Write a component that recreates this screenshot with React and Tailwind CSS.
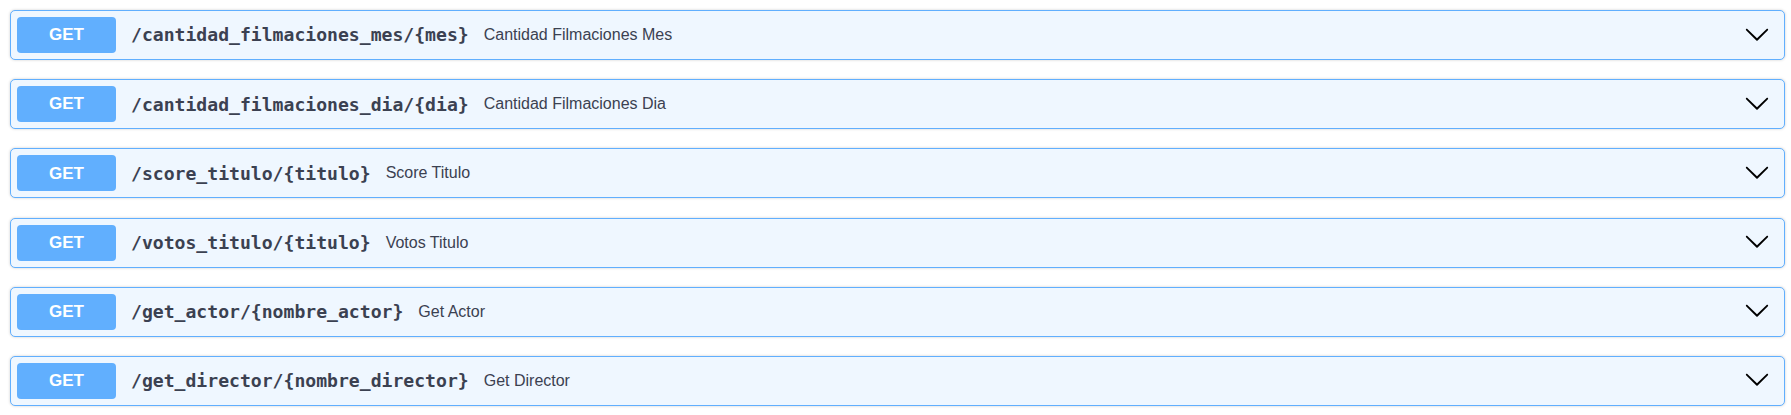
import React from "react";

const ops = [
  { path: "/cantidad_filmaciones_mes/{mes}", desc: "Cantidad Filmaciones Mes" },
  { path: "/cantidad_filmaciones_dia/{dia}", desc: "Cantidad Filmaciones Dia" },
  { path: "/score_titulo/{titulo}", desc: "Score Titulo" },
  { path: "/votos_titulo/{titulo}", desc: "Votos Titulo" },
  { path: "/get_actor/{nombre_actor}", desc: "Get Actor" },
  { path: "/get_director/{nombre_director}", desc: "Get Director" },
];

function Chevron() {
  return (
    <svg width="26" height="26" viewBox="0 0 20 20" className="shrink-0 mr-[8px] mt-[-3px]" fill="#000">
      <path d="M17.418 6.109c.272-.268.709-.268.979 0s.271.701 0 .969l-7.908 7.83c-.27.268-.707.268-.979 0l-7.908-7.83c-.27-.268-.27-.701 0-.969.271-.268.709-.268.979 0L10 13.25l7.418-7.141z" />
    </svg>
  );
}

export default function App() {
  return (
    <div className="w-[1791px] h-[415px] bg-white pt-[10px] pl-[10px]" style={{ fontFamily: '"Liberation Sans", Arial, sans-serif' }}>
      <div className="w-[1775px] flex flex-col gap-[19.2px]">
        {ops.map((op) => (
          <div
            key={op.path}
            className="h-[50px] flex items-center border border-[#61affe] bg-[#eff7ff] rounded-[5px] shadow-[0_0_3px_rgba(0,0,0,0.19)] px-[6px]"
          >
            <div className="w-[99px] h-[36px] shrink-0 rounded-[4px] bg-[#61affe] text-white font-bold text-[17px] flex items-center justify-center">
              GET
            </div>
            <div
              className="ml-[15px] text-[18.1px] font-bold text-[#3b4151] whitespace-nowrap"
              style={{ fontFamily: '"DejaVu Sans Mono", monospace' }}
            >
              {op.path}
            </div>
            <div className="ml-[15px] text-[16px] text-[#3b4151] whitespace-nowrap">{op.desc}</div>
            <div className="flex-1" />
            <Chevron />
          </div>
        ))}
      </div>
    </div>
  );
}
